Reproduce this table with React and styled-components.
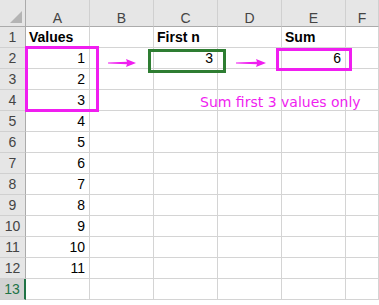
import styled, { createGlobalStyle } from 'styled-components';

const GlobalStyle = createGlobalStyle`
  html, body {
    margin: 0;
    padding: 0;
    background: #ffffff;
  }
`;

const COLS = ['A', 'B', 'C', 'D', 'E', 'F'];
const ROW_COUNT = 13;
const PINK = '#f01ef0';

// cell contents keyed by "A1" style address
const cells = {
  A1: { text: 'Values', bold: true },
  C1: { text: 'First n', bold: true },
  E1: { text: 'Sum', bold: true },
  C2: { text: '3', num: true },
  E2: { text: '6', num: true },
};
for (let r = 2; r <= 12; r++) cells[`A${r}`] = { text: String(r - 1), num: true };

// grid line helpers: sheet row r sits on grid row r + 1, column A on grid column 2
const gridRow = (r) => r + 1;
const gridCol = (c) => COLS.indexOf(c) + 2;

const Sheet = styled.div`
  width: 379px;
  height: 305px;
  overflow: hidden;
  font-family: 'Liberation Sans', Arial, sans-serif;
`;

const Grid = styled.div`
  display: grid;
  grid-template-columns: 26px repeat(5, 64px) 1fr;
  grid-template-rows: 27px repeat(${ROW_COUNT}, 21px) 1fr;
`;

const Corner = styled.div`
  grid-area: 1 / 1;
  position: relative;
  background: #e6e6e6;
  border-right: 1px solid #ababab;
  border-bottom: 1px solid #ababab;
  &::after {
    content: '';
    position: absolute;
    right: 3px;
    bottom: 3px;
    border-left: 12px solid transparent;
    border-bottom: 12px solid #b4b4b4;
  }
`;

const ColHead = styled.div`
  grid-row: 1;
  grid-column: ${({ $col }) => $col};
  display: flex;
  align-items: center;
  justify-content: center;
  padding-top: 9px;
  background: #e6e6e6;
  border-right: 1px solid #d0d0d0;
  border-bottom: 1px solid #ababab;
  color: #444444;
  font-size: 14px;
`;

const RowHead = styled.div`
  grid-row: ${({ $row }) => $row};
  grid-column: 1;
  display: flex;
  align-items: center;
  justify-content: center;
  background: ${({ $active }) => ($active ? '#d2d2d2' : '#e6e6e6')};
  border-right: ${({ $active }) => ($active ? '2px solid #217346' : '1px solid #ababab')};
  border-bottom: 1px solid #d0d0d0;
  color: ${({ $active }) => ($active ? '#217346' : '#444444')};
  font-size: 14px;
`;

const Cell = styled.div`
  grid-row: ${({ $row }) => $row};
  grid-column: ${({ $col }) => $col};
  display: flex;
  align-items: flex-end;
  justify-content: ${({ $num }) => ($num ? 'flex-end' : 'flex-start')};
  padding: 0 4px 2px 3px;
  border-right: 1px solid #d4d4d4;
  border-bottom: 1px solid #d4d4d4;
  color: #000000;
  font-size: 14px;
  font-weight: ${({ $bold }) => ($bold ? 700 : 400)};
  white-space: nowrap;
`;

// highlight rectangle drawn over a range of cells, bleeding past the cell edges
const Frame = styled.div`
  grid-row: ${({ $rows }) => $rows};
  grid-column: ${({ $cols }) => $cols};
  margin: ${({ $bleed }) => $bleed};
  border: 3px solid ${({ $color }) => $color};
  z-index: 1;
`;

const ArrowSlot = styled.div`
  grid-row: ${({ $row }) => $row};
  grid-column: ${({ $col }) => $col};
  display: flex;
  align-items: flex-end;
  padding: 0 0 1px 18px;
  z-index: 1;
`;

const Note = styled.div`
  grid-row: ${({ $row }) => $row};
  grid-column: ${({ $cols }) => $cols};
  display: flex;
  align-items: center;
  padding: 3px 0 0 46px;
  color: ${PINK};
  font-family: 'DejaVu Sans', Verdana, sans-serif;
  font-size: 14px;
  white-space: nowrap;
  z-index: 1;
`;

function Arrow({ length }) {
  return (
    <svg width={length} height={10} viewBox={`0 0 ${length} 10`}>
      <polygon
        points={`0,4.4 ${length - 9},3.8 ${length - 10},1 ${length},5 ${length - 10},9 ${length - 9},6.2 0,5.6`}
        fill={PINK}
      />
    </svg>
  );
}

export default function App() {
  const body = [];
  for (let r = 1; r <= ROW_COUNT; r++) {
    body.push(
      <RowHead key={`h${r}`} $row={gridRow(r)} $active={r === ROW_COUNT}>
        {r}
      </RowHead>
    );
    COLS.forEach((c) => {
      const cell = cells[`${c}${r}`];
      body.push(
        <Cell key={`${c}${r}`} $row={gridRow(r)} $col={gridCol(c)} $num={cell?.num} $bold={cell?.bold}>
          {cell?.text}
        </Cell>
      );
    });
  }

  return (
    <>
      <GlobalStyle />
      <Sheet>
        <Grid>
          <Corner />
          {COLS.map((c) => (
            <ColHead key={c} $col={gridCol(c)}>
              {c}
            </ColHead>
          ))}
          {body}
          <Frame $rows="3 / span 3" $cols="2" $bleed="-2px -9px -1px -1px" $color={PINK} />
          <Frame $rows="3" $cols="4" $bleed="1px -8px -4px -6px" $color="#2e7d32" />
          <Frame $rows="3" $cols="6" $bleed="0 -6px -2px -6px" $color={PINK} />
          <ArrowSlot $row={3} $col={3}>
            <Arrow length={28} />
          </ArrowSlot>
          <ArrowSlot $row={3} $col={5}>
            <Arrow length={30} />
          </ArrowSlot>
          <Note $row={5} $cols="4 / span 4">
            Sum first 3 values only
          </Note>
        </Grid>
      </Sheet>
    </>
  );
}
